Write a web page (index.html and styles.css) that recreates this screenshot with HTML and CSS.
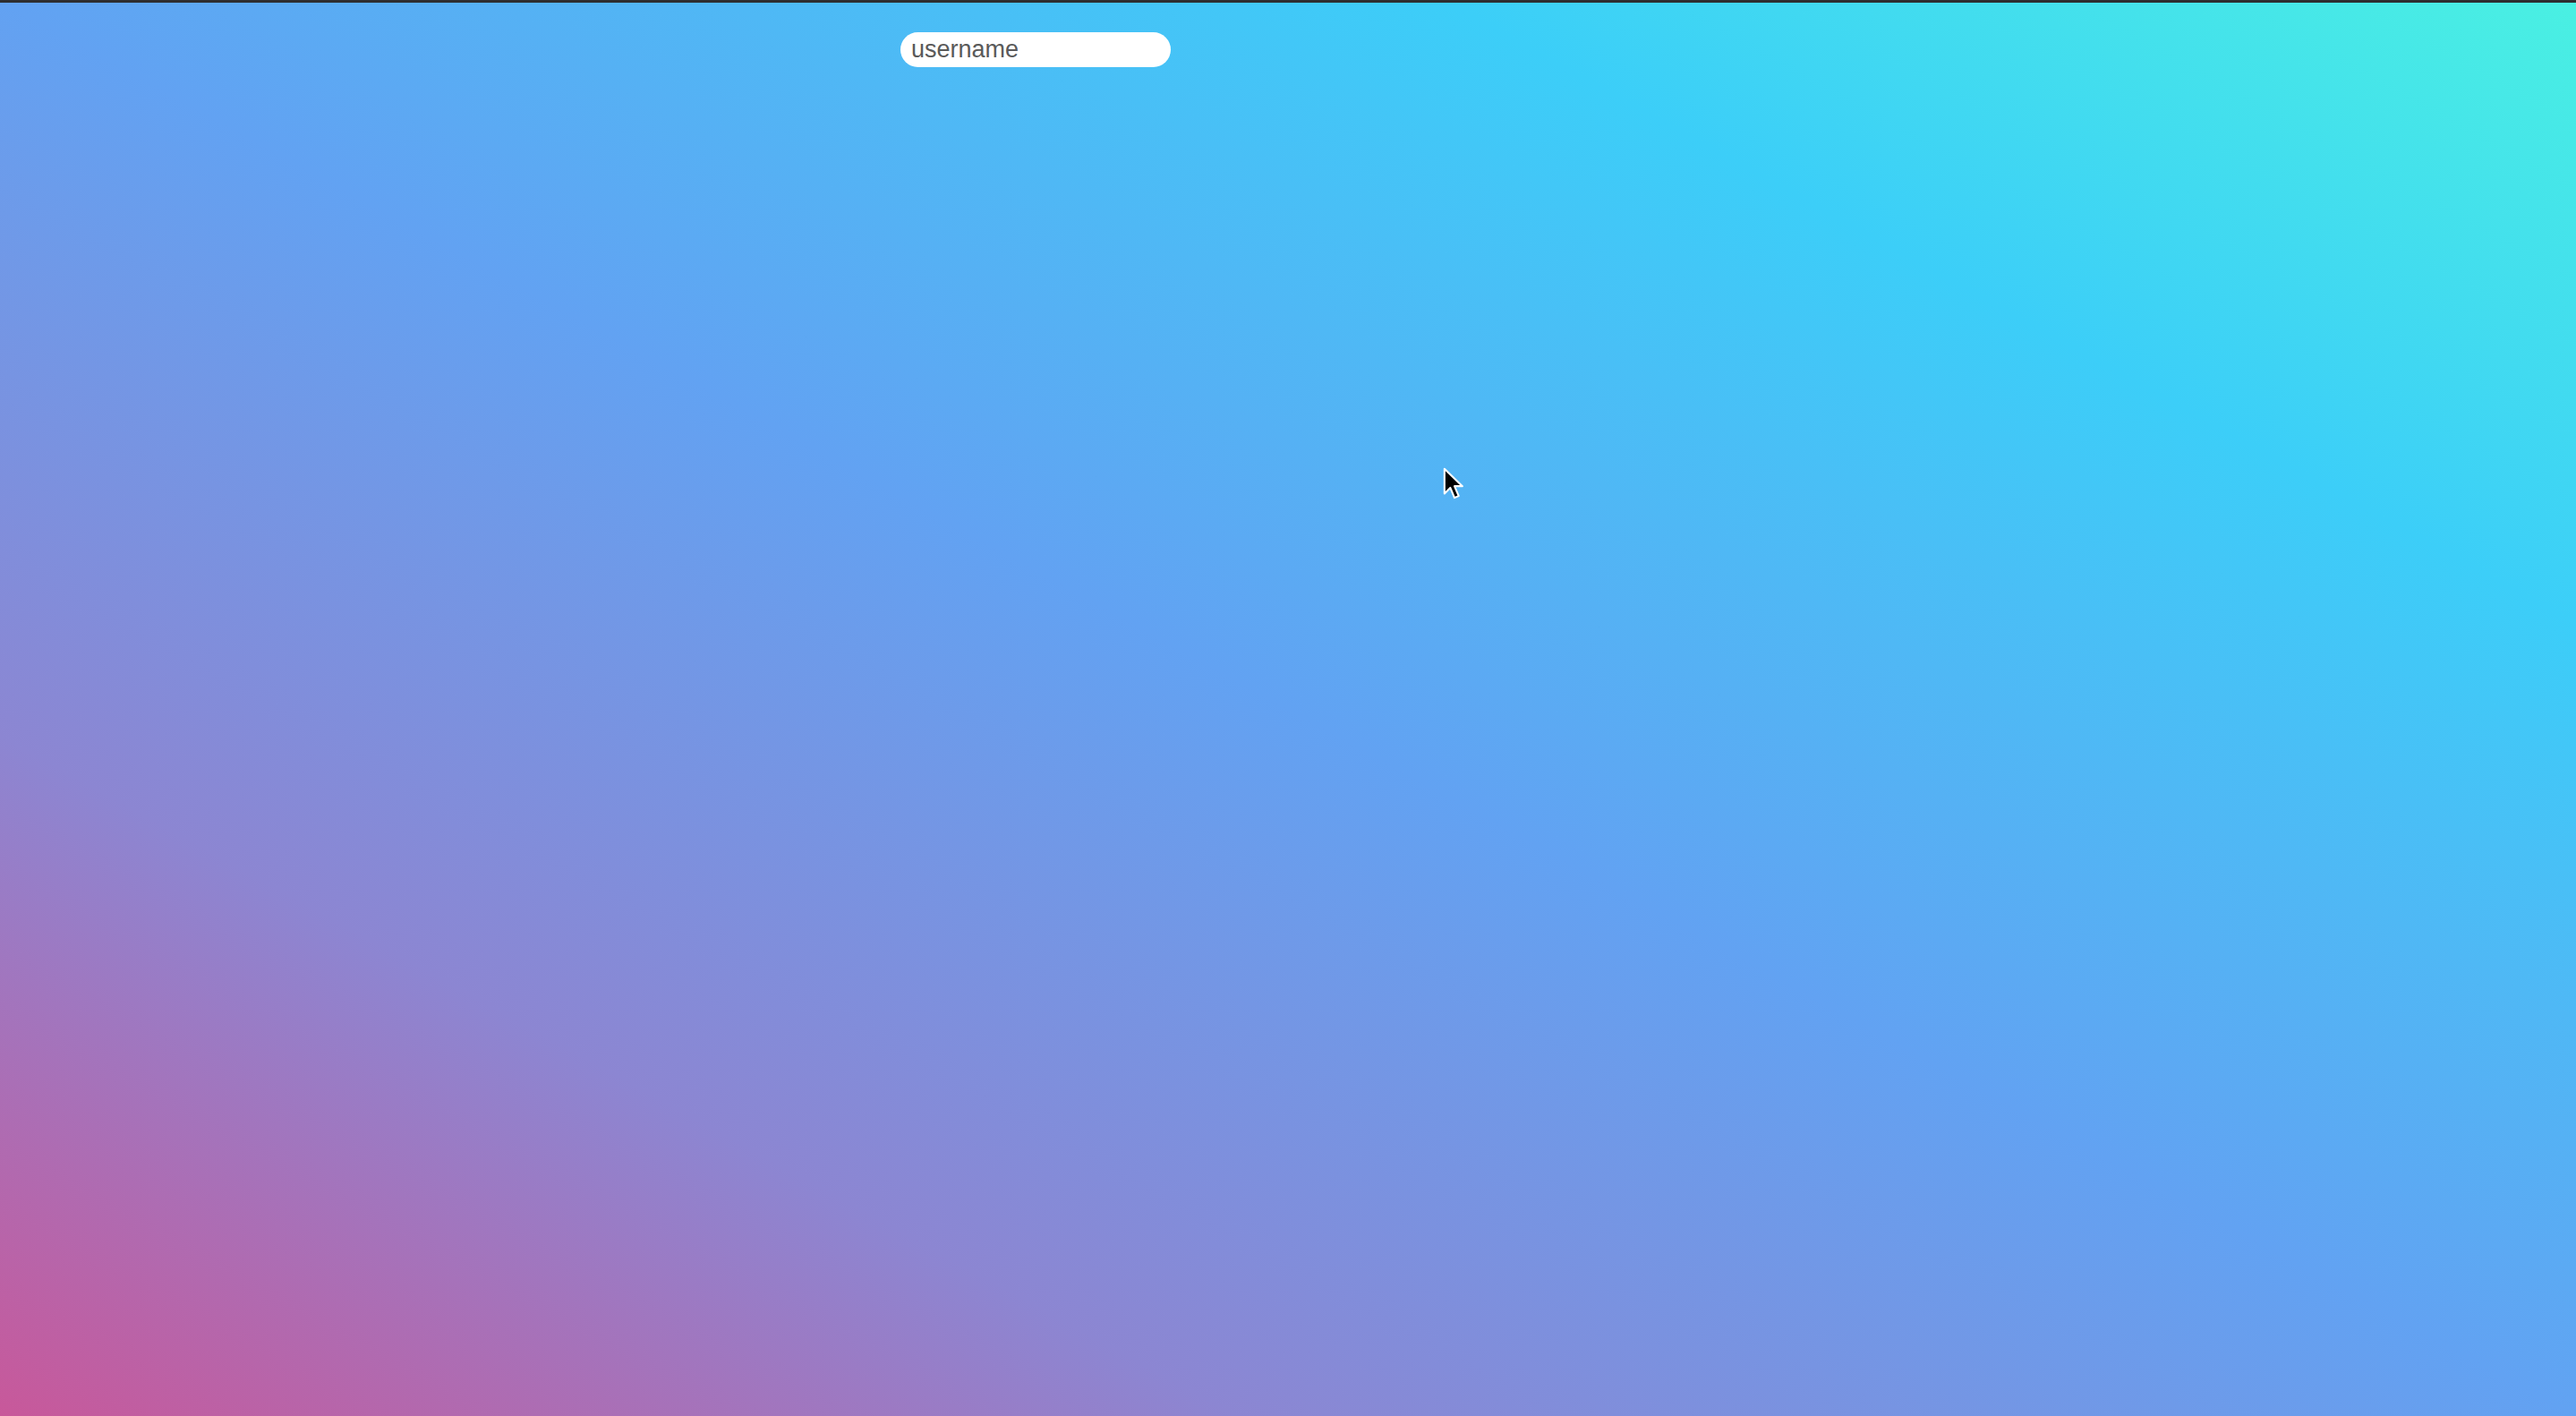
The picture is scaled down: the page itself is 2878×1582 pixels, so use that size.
FILE: index.html
```html
<!DOCTYPE html>
<html>
<head>
<meta charset="utf-8">
<title>username</title>
<link rel="stylesheet" href="styles.css">
</head>
<body>
<div class="topbar"></div>
<main class="page">
  <input class="username" type="text" placeholder="username">
</main>
<svg class="cursor" width="26" height="40" viewBox="0 0 22 34" aria-hidden="true">
  <path d="M1.5 1.5 L1.5 25 L7 19.5 L11 29 L15 27.3 L11 18 L18.5 18 Z" fill="#000" stroke="#fff" stroke-width="1.8" stroke-linejoin="round"/>
</svg>
</body>
</html>
```
FILE: styles.css
```css
html, body {
  margin: 0;
  padding: 0;
  height: 100%;
}
body {
  background: linear-gradient(to top right, #c8589a 0%, #8c86d2 24%, #62a2f2 50%, #3ccef8 78%, #4af0e2 100%);
  font-family: "Liberation Sans", Arial, sans-serif;
  overflow: hidden;
  position: relative;
}
.topbar {
  height: 3px;
  background: #2e2e30;
}
.page {
  display: flex;
  padding: 33px 0 0 1006px;
}
.username {
  box-sizing: border-box;
  width: 302px;
  height: 39px;
  border: none;
  outline: none;
  border-radius: 20px;
  background: #fff;
  padding: 0 12px;
  font-family: "Liberation Sans", Arial, sans-serif;
  font-size: 27px;
  color: #555;
}
.username::placeholder {
  color: #5a5a5a;
  opacity: 1;
}
.cursor {
  position: absolute;
  left: 1612px;
  top: 522px;
}
```
